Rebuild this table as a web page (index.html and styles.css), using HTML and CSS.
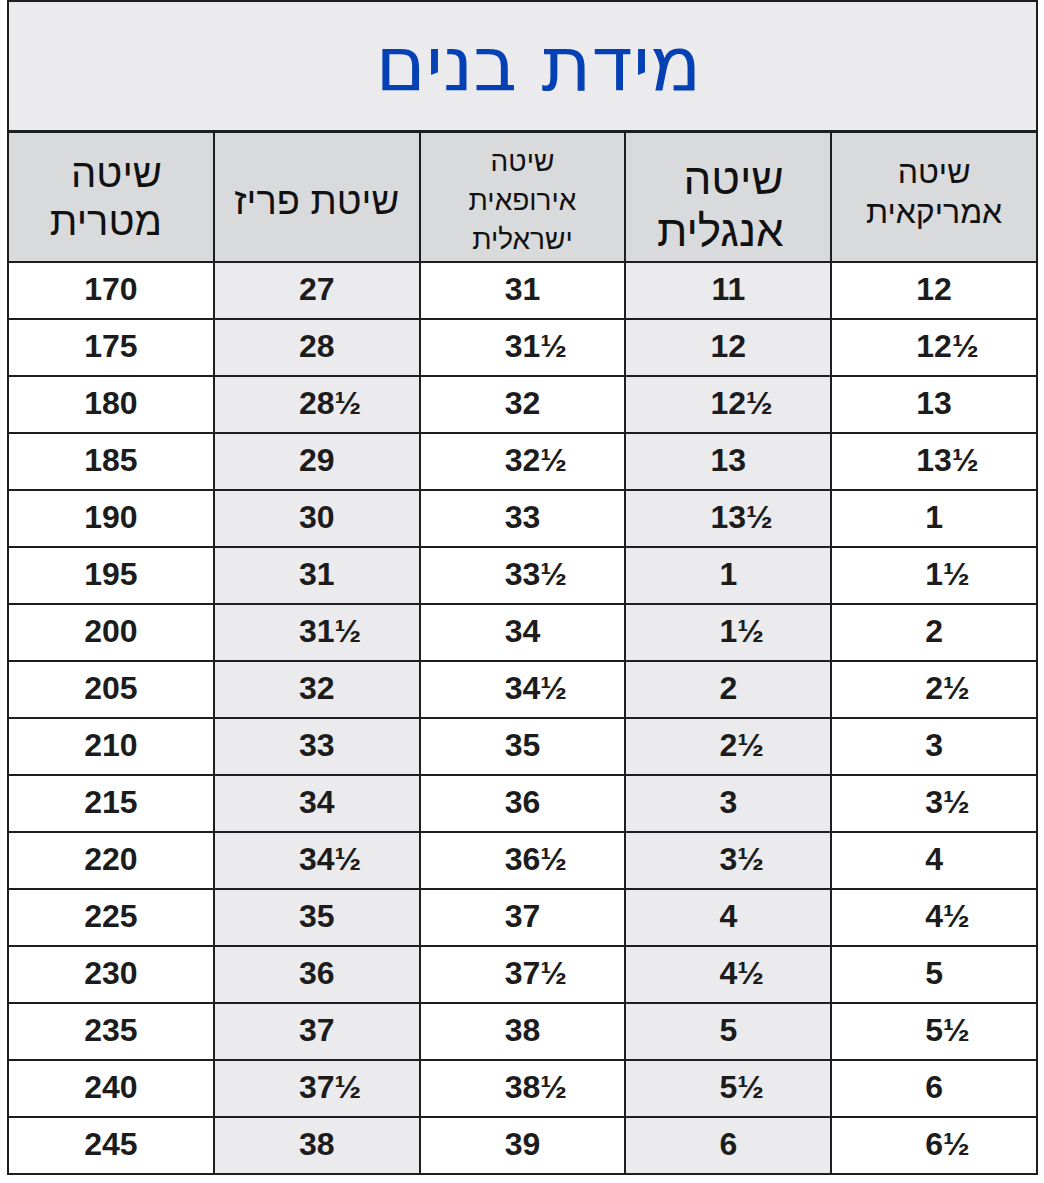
FILE: index.html
```html
<!DOCTYPE html>
<html lang="he">
<head>
<meta charset="utf-8">
<title>מידת בנים</title>
<link rel="stylesheet" href="styles.css">
</head>
<body>
<table class="chart">
  <thead>
    <tr class="title-row">
      <th colspan="5" class="title" dir="rtl">מידת בנים</th>
    </tr>
    <tr class="head-row">
      <th class="hc c1"><span class="hl" dir="rtl">שיטה<br>מטרית</span></th>
      <th class="hc c2"><span class="hl" dir="rtl">שיטת פריז</span></th>
      <th class="hc c3"><span class="hl" dir="rtl">שיטה<br>אירופאית<br>ישראלית</span></th>
      <th class="hc c4"><span class="hl" dir="rtl">שיטה<br>אנגלית</span></th>
      <th class="hc c5"><span class="hl" dir="rtl">שיטה<br>אמריקאית</span></th>
    </tr>
  </thead>
  <tbody>
    <tr><td>170</td><td class="g">27</td><td>31</td><td class="g">11</td><td>12</td></tr>
    <tr><td>175</td><td class="g">28</td><td>31<span class="h">½</span></td><td class="g">12</td><td>12<span class="h">½</span></td></tr>
    <tr><td>180</td><td class="g">28<span class="h">½</span></td><td>32</td><td class="g">12<span class="h">½</span></td><td>13</td></tr>
    <tr><td>185</td><td class="g">29</td><td>32<span class="h">½</span></td><td class="g">13</td><td>13<span class="h">½</span></td></tr>
    <tr><td>190</td><td class="g">30</td><td>33</td><td class="g">13<span class="h">½</span></td><td>1</td></tr>
    <tr><td>195</td><td class="g">31</td><td>33<span class="h">½</span></td><td class="g">1</td><td>1<span class="h">½</span></td></tr>
    <tr><td>200</td><td class="g">31<span class="h">½</span></td><td>34</td><td class="g">1<span class="h">½</span></td><td>2</td></tr>
    <tr><td>205</td><td class="g">32</td><td>34<span class="h">½</span></td><td class="g">2</td><td>2<span class="h">½</span></td></tr>
    <tr><td>210</td><td class="g">33</td><td>35</td><td class="g">2<span class="h">½</span></td><td>3</td></tr>
    <tr><td>215</td><td class="g">34</td><td>36</td><td class="g">3</td><td>3<span class="h">½</span></td></tr>
    <tr><td>220</td><td class="g">34<span class="h">½</span></td><td>36<span class="h">½</span></td><td class="g">3<span class="h">½</span></td><td>4</td></tr>
    <tr><td>225</td><td class="g">35</td><td>37</td><td class="g">4</td><td>4<span class="h">½</span></td></tr>
    <tr><td>230</td><td class="g">36</td><td>37<span class="h">½</span></td><td class="g">4<span class="h">½</span></td><td>5</td></tr>
    <tr><td>235</td><td class="g">37</td><td>38</td><td class="g">5</td><td>5<span class="h">½</span></td></tr>
    <tr><td>240</td><td class="g">37<span class="h">½</span></td><td>38<span class="h">½</span></td><td class="g">5<span class="h">½</span></td><td>6</td></tr>
    <tr><td>245</td><td class="g">38</td><td>39</td><td class="g">6</td><td>6<span class="h">½</span></td></tr>
  </tbody>
</table>
</body>
</html>
```

FILE: styles.css
```css
html, body {
  margin: 0;
  padding: 0;
  background: #ffffff;
}

body {
  font-family: "Liberation Sans", Arial, sans-serif;
  color: #1c1c1c;
}

.chart {
  margin: 0 0 0 7px;
  width: 1031px;
  border-collapse: collapse;
  table-layout: fixed;
  border: 2px solid #1e1e1e;
}

th,
td {
  border: 2px solid #1e1e1e;
  padding: 0;
  text-align: center;
  vertical-align: middle;
}

.title-row {
  height: 130px;
}

.title {
  background: #ebebee;
  border-bottom-width: 3px;
  font-family: "DejaVu Sans", "Open Sans", sans-serif;
  font-weight: 400;
  font-size: 76px;
  color: #0540b4;
  line-height: 1;
  padding-bottom: 2px;
  padding-left: 32px;
}

.head-row {
  height: 131px;
}

.hc {
  background: #d9dadc;
  font-weight: 400;
  color: #111;
  vertical-align: top;
}

.hl {
  display: inline-block;
  text-align: right;
}

.c1 { font-size: 40px; line-height: 48px; vertical-align: middle; }
.c1 .hl { margin-left: -10px; }
.c2 { font-size: 38px; line-height: 40px; padding-top: 48px; }
.c3 { font-size: 28px; line-height: 39px; padding-top: 9px; }
.c3 .hl { text-align: center; }
.c4 { font-size: 44px; line-height: 52px; padding-top: 20px; }
.c4 .hl { margin-right: 16px; }
.c5 { font-size: 32px; line-height: 40px; padding-top: 19px; }
.c5 .hl { text-align: center; }

tbody tr {
  height: 57px;
}

tbody td {
  font-size: 32px;
  font-weight: 700;
  line-height: 1;
  padding-bottom: 3px;
  background: #ffffff;
}

tbody td.g {
  background: #ebebee;
}

.h {
  display: inline-block;
  width: 0;
  text-align: left;
}
```
